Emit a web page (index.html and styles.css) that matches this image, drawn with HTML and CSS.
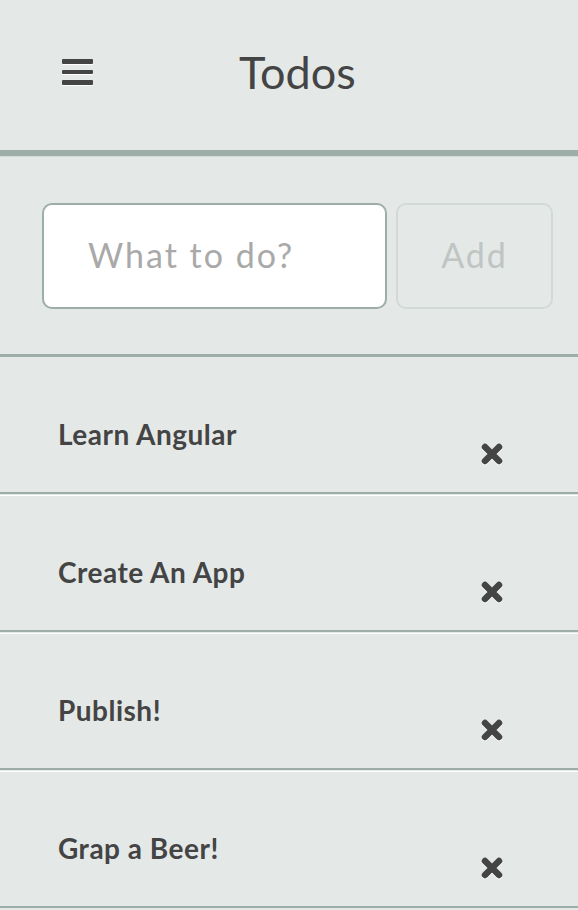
FILE: index.html
```html
<!DOCTYPE html>
<html lang="en">
<head>
<meta charset="utf-8">
<title>Todos</title>
<link rel="stylesheet" href="styles.css">
</head>
<body>
<header class="header">
  <button class="menu" aria-label="Menu">
    <span class="bar"></span>
    <span class="bar"></span>
    <span class="bar"></span>
  </button>
  <h1 class="title">Todos</h1>
</header>
<form class="add-form">
  <input class="todo-input" type="text" placeholder="What to do?">
  <button class="add-btn" type="button" disabled>Add</button>
</form>
<ul class="list">
  <li class="item"><span class="item-text">Learn Angular</span><svg class="remove" viewBox="0 0 22 22"><path d="M4 4L18 18M18 4L4 18"/></svg></li>
  <li class="item"><span class="item-text">Create An App</span><svg class="remove" viewBox="0 0 22 22"><path d="M4 4L18 18M18 4L4 18"/></svg></li>
  <li class="item"><span class="item-text">Publish!</span><svg class="remove" viewBox="0 0 22 22"><path d="M4 4L18 18M18 4L4 18"/></svg></li>
  <li class="item"><span class="item-text">Grap a Beer!</span><svg class="remove" viewBox="0 0 22 22"><path d="M4 4L18 18M18 4L4 18"/></svg></li>
</ul>
</body>
</html>
```
FILE: styles.css
```css
* { box-sizing: border-box; }
html, body {
  margin: 0;
  padding: 0;
  background: #e4e9e8;
  font-family: Lato, "Open Sans", sans-serif;
  color: #444;
}
.header {
  height: 156px;
  display: flex;
  align-items: center;
  padding: 0 0 6px 62px;
  border-bottom: 6px solid #9dada8;
  box-shadow: 0 1px 0 #d3d9d7;
}
.menu {
  display: flex;
  flex-direction: column;
  gap: 6px;
  width: 31px;
  padding: 0;
  margin: 0;
  border: 0;
  background: none;
}
.bar {
  display: block;
  height: 4.5px;
  border-radius: 1px;
  background: #444;
  box-shadow: 0 1px 0 #fff;
}
.title {
  margin: 0 0 0 146px;
  font-size: 45px;
  font-weight: 400;
  line-height: 1;
  color: #444;
}
.add-form {
  display: flex;
  gap: 9px;
  padding: 46px 25px 45px 42px;
  margin-top: 1px;
  border-bottom: 3px solid #9dada8;
}
.todo-input {
  width: 345px;
  height: 106px;
  border: 2px solid #9dada8;
  border-radius: 10px;
  background: #fff;
  padding: 0 0 4px 44px;
  font-family: inherit;
  font-size: 34px;
  letter-spacing: 2px;
  color: #444;
  outline: none;
}
.todo-input::placeholder { color: #a9a9a9; }
.add-btn {
  flex: 1;
  height: 106px;
  border: 2px solid #d3d9d7;
  border-radius: 10px;
  background: transparent;
  font-family: inherit;
  font-size: 34px;
  letter-spacing: 2px;
  color: #c0c4c2;
  padding: 0 0 4px 0;
}
.list {
  list-style: none;
  margin: 0;
  padding: 0;
}
.item {
  display: flex;
  justify-content: space-between;
  align-items: flex-start;
  height: 137px;
  padding: 61px 75px 0 58px;
  border-top: 1px solid #e4e9e8;
  border-bottom: 2px solid #9dada8;
}
.item + .item {
  margin-top: 1px;
  border-top-color: #fff;
}
.item-text {
  font-size: 28px;
  font-weight: 700;
  letter-spacing: 0.5px;
  line-height: 30px;
  color: #444;
}
.remove {
  width: 22px;
  height: 22px;
  margin-top: 24px;
  stroke: #444;
  stroke-width: 6.5;
  stroke-linecap: round;
  fill: none;
  filter: drop-shadow(0 1px 0 #fff);
}
```
